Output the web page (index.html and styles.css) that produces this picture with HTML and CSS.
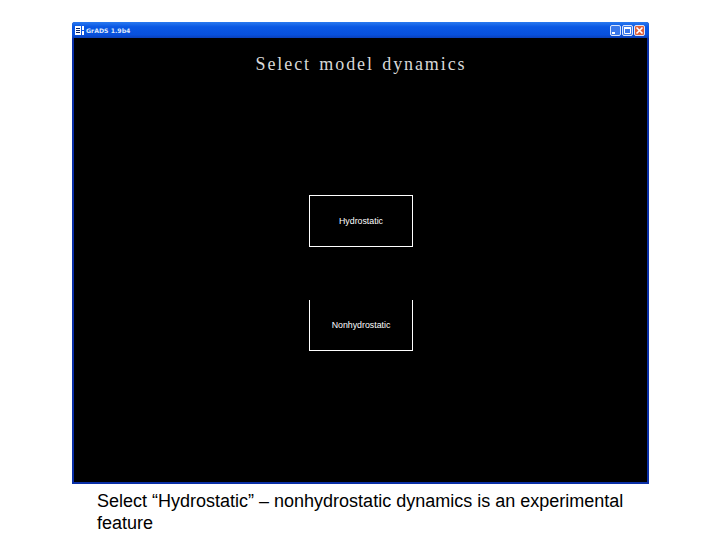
FILE: index.html
```html
<!DOCTYPE html>
<html lang="en">
<head>
<meta charset="utf-8">
<title>GrADS 1.9b4</title>
<link rel="stylesheet" href="styles.css">
</head>
<body>
<main class="slide">
  <section class="window">
    <header class="titlebar">
      <svg class="app-icon" width="9" height="9" viewBox="0 0 9 9"><path d="M0 0h6v9H0z" fill="#fff"/><path d="M1 2h4v1H1zM1 4h4v1H1zM1 6h4v1H1z" fill="#0a246a"/><path d="M7 0h2v4H7zM7 5h2v4H7z" fill="#fff"/></svg>
      <span class="app-name">GrADS 1.9b4</span>
      <div class="controls">
        <span class="ctl"><svg width="11" height="11" viewBox="0 0 11 11"><path d="M2 7h3v2H2z" fill="#fff"/></svg></span>
        <span class="ctl"><svg width="11" height="11" viewBox="0 0 11 11"><path d="M2.500 3.500h6v5h-6z" fill="none" stroke="#fff"/><path d="M2 2h7v2H2z" fill="#fff"/></svg></span>
        <span class="ctl close"><svg width="11" height="11" viewBox="0 0 11 11"><path d="M2.500 2.500l6 6M8.500 2.500l-6 6" stroke="#fff" stroke-width="1.600"/></svg></span>
      </div>
    </header>
    <div class="canvas">
      <h1 class="heading">Select model dynamics</h1>
      <div class="choice choice-first">Hydrostatic</div>
      <div class="choice choice-second">Nonhydrostatic</div>
    </div>
  </section>
  <p class="caption">Select “Hydrostatic” – nonhydrostatic dynamics is an experimental feature</p>
</main>
</body>
</html>
```
FILE: styles.css
```css
* { box-sizing: border-box; }
html, body { margin: 0; padding: 0; background: #fff; }
.slide { width: 720px; height: 540px; padding: 22px 0 0 72px; overflow: hidden; }
.window {
  width: 577px; height: 462px; display: flex; flex-direction: column;
  background: #0a2fa6; padding: 0 2px 2px; border-radius: 3px 3px 0 0;
}
.titlebar {
  height: 16px; flex: none; display: flex; align-items: center;
  margin: 0 -2px; padding: 1px 4px 0 3px;
  background: linear-gradient(#2a7af0, #0a58e4 30%, #0850dc 80%, #0a40b8);
  border-radius: 3px 3px 0 0;
}
.app-icon { flex: none; }
.app-name {
  margin: 1px 0 0 2px; color: #dfe8fb; font: 700 6.200px/1 "DejaVu Sans", sans-serif;
}
.controls { margin-left: auto; display: flex; gap: 1px; }
.ctl {
  width: 11px; height: 11px; display: flex; align-items: center; justify-content: center;
  background: #3a78ea; border: 1px solid #dce6fa; border-radius: 2px; overflow: hidden;
}
.ctl svg { flex: none; }
.close { background: #e0603a; }
.canvas {
  flex: 1; background: #000; color: #fff; display: flex; flex-direction: column; align-items: center;
  padding-left: 1px;
}
.heading {
  margin: 18px 0 0; height: 17px; font: 400 18px/17px "Liberation Serif", serif;
  letter-spacing: 1.900px; word-spacing: 2px; color: #d8d8d8; white-space: nowrap;
}
.choice {
  width: 104px; display: flex; align-items: center; justify-content: center;
  border: 1px solid #fff; font: 400 8.800px/1 "Liberation Sans", sans-serif; white-space: nowrap;
}
.choice-first { margin-top: 122px; height: 52px; padding-top: 1px; }
.choice-second { margin-top: 53px; height: 51px; border-top: 0; padding-top: 1px; }
.caption {
  margin: 6px 0 0 25px; width: 540px; color: #000;
  font: 18px/22px "Liberation Sans", Arial, sans-serif;
}
```
